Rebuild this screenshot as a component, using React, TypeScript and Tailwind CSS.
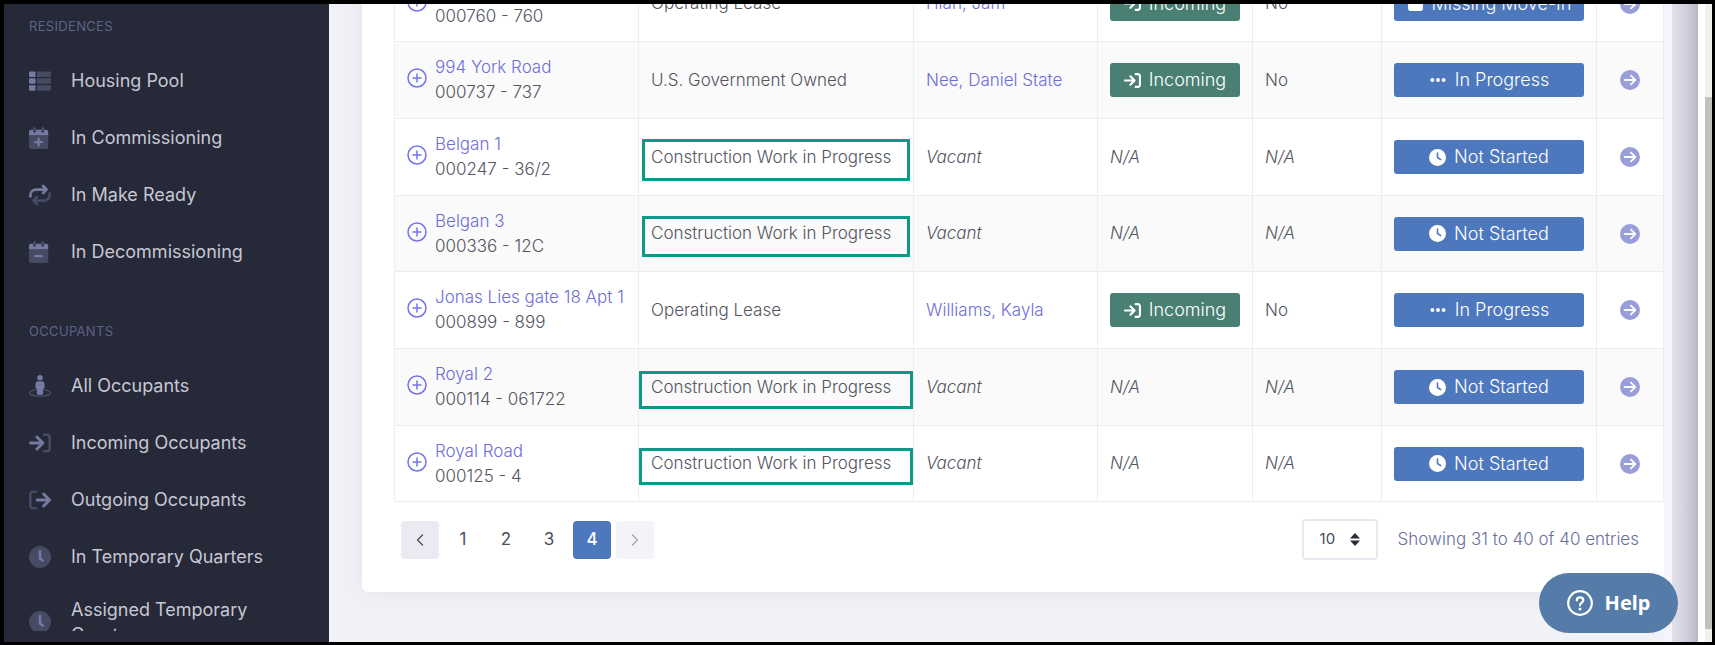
import type { ReactNode } from "react"
import { ChevronLeft, ChevronRight } from "lucide-react"
import { FaArrowRightToBracket, FaCircleArrowRight, FaClock, FaEllipsis, FaSquare } from "react-icons/fa6"

type IconName = "list" | "plus" | "repeat" | "minus" | "person" | "in" | "out" | "clock"

type Residence = {
  name: string
  code: string
  ownership: string
  occupant?: string
  status: "In Progress" | "Not Started" | "Missing Move-In"
  outline?: "tall" | "wide"
}

const residenceLinks: { label: string; icon: IconName }[] = [
  { label: "Housing Pool", icon: "list" },
  { label: "In Commissioning", icon: "plus" },
  { label: "In Make Ready", icon: "repeat" },
  { label: "In Decommissioning", icon: "minus" },
]

const occupantLinks: { label: string; icon: IconName }[] = [
  { label: "All Occupants", icon: "person" },
  { label: "Incoming Occupants", icon: "in" },
  { label: "Outgoing Occupants", icon: "out" },
  { label: "In Temporary Quarters", icon: "clock" },
  { label: "Assigned Temporary Quarters", icon: "clock" },
]

const residences: Residence[] = [
  { name: "Belgan 12", code: "000760 - 760", ownership: "Operating Lease", occupant: "Hian, Jam", status: "Missing Move-In" },
  { name: "994 York Road", code: "000737 - 737", ownership: "U.S. Government Owned", occupant: "Nee, Daniel State", status: "In Progress" },
  { name: "Belgan 1", code: "000247 - 36/2", ownership: "Construction Work in Progress", status: "Not Started", outline: "tall" },
  { name: "Belgan 3", code: "000336 - 12C", ownership: "Construction Work in Progress", status: "Not Started", outline: "tall" },
  { name: "Jonas Lies gate 18 Apt 1", code: "000899 - 899", ownership: "Operating Lease", occupant: "Williams, Kayla", status: "In Progress" },
  { name: "Royal 2", code: "000114 - 061722", ownership: "Construction Work in Progress", status: "Not Started", outline: "wide" },
  { name: "Royal Road", code: "000125 - 4", ownership: "Construction Work in Progress", status: "Not Started", outline: "wide" },
]

// Two-tone sidebar icons, the dim layer is #474a63
function NavIcon({ name }: { name: IconName }) {
  const dim = "#474a63"
  const calendar = (
    <>
      <path fill={dim} d="M0 192h448v272a48 48 0 0 1-48 48H48a48 48 0 0 1-48-48zM96 32a32 32 0 0 1 64 0v64H96zM288 32a32 32 0 0 1 64 0v64h-64z" />
      <path fill="currentColor" d="M0 192v-80a48 48 0 0 1 48-48h48v32a32 32 0 0 0 64 0V64h128v32a32 32 0 0 0 64 0V64h48a48 48 0 0 1 48 48v80z" />
    </>
  )
  const shapes: Record<IconName, ReactNode> = {
    list: (
      <>
        <path fill={dim} d="M184 32h304a24 24 0 0 1 24 24v80a24 24 0 0 1-24 24H184zM184 192h328v128H184zM184 352h328v104a24 24 0 0 1-24 24H184z" />
        <path fill="currentColor" d="M24 32h104a24 24 0 0 1 24 24v104H24a24 24 0 0 1-24-24V56a24 24 0 0 1 24-24zM24 192h104a24 24 0 0 1 24 24v80a24 24 0 0 1-24 24H24a24 24 0 0 1-24-24v-80a24 24 0 0 1 24-24zM24 352h128v104a24 24 0 0 1-24 24H24a24 24 0 0 1-24-24v-80a24 24 0 0 1 24-24z" />
      </>
    ),
    plus: (
      <>
        {calendar}
        <path stroke="currentColor" strokeWidth="52" strokeLinecap="round" d="M224 272v160M144 352h160" />
      </>
    ),
    minus: (
      <>
        {calendar}
        <path stroke="currentColor" strokeWidth="52" strokeLinecap="round" d="M144 352h160" />
      </>
    ),
    repeat: (
      <g fill="none" strokeWidth="64" strokeLinecap="round" strokeLinejoin="round">
        <path stroke={dim} d="M480 224v32a128 128 0 0 1-128 128H112M184 304l-80 80 80 80" />
        <path stroke="currentColor" d="M32 288v-32a128 128 0 0 1 128-128h240M328 48l80 80-80 80" />
      </g>
    ),
    person: (
      <>
        <path fill="none" stroke={dim} strokeWidth="34" strokeLinecap="round" d="M150 346C70 358 18 384 18 416c0 46 106 78 238 78s238-32 238-78c0-32-52-58-132-70" />
        <circle fill="currentColor" cx="256" cy="64" r="64" />
        <path fill="currentColor" d="M216 144h80a64 64 0 0 1 64 64v88a32 32 0 0 1-32 30v102a32 32 0 0 1-32 32h-80a32 32 0 0 1-32-32V326a32 32 0 0 1-32-30v-88a64 64 0 0 1 64-64z" />
      </>
    ),
    in: (
      <g fill="none" strokeLinecap="round" strokeLinejoin="round">
        <path stroke={dim} strokeWidth="60" d="M352 64h64a64 64 0 0 1 64 64v256a64 64 0 0 1-64 64h-64" />
        <path stroke="currentColor" strokeWidth="66" d="M34 256h280M184 116l140 140-140 140" />
      </g>
    ),
    out: (
      <g fill="none" strokeLinecap="round" strokeLinejoin="round">
        <path stroke={dim} strokeWidth="60" d="M160 64H96a64 64 0 0 0-64 64v256a64 64 0 0 0 64 64h64" />
        <path stroke="currentColor" strokeWidth="66" d="M190 256h280M340 116l140 140-140 140" />
      </g>
    ),
    clock: (
      <>
        <circle fill={dim} cx="256" cy="256" r="256" />
        <path fill="none" stroke="currentColor" strokeWidth="60" strokeLinecap="round" strokeLinejoin="round" d="M256 116v176l62 44" />
      </>
    ),
  }

  return (
    <svg viewBox="0 0 512 512" className="size-[22px] shrink-0 text-[#777aa0]" aria-hidden="true">
      {shapes[name]}
    </svg>
  )
}

function NavSection({ title, links }: { title: string; links: { label: string; icon: IconName }[] }) {
  return (
    <section>
      <h2 className="pb-4 text-[13px] leading-5 tracking-wide text-[#5f6389] uppercase">{title}</h2>
      <ul>
        {links.map((link) => (
          <li key={link.label}>
            <a href="#" className="flex min-h-[57px] items-center gap-5 py-3 text-lg leading-[25px] text-[#c6c7d3]">
              <NavIcon name={link.icon} />
              <span className="max-w-52">{link.label}</span>
            </a>
          </li>
        ))}
      </ul>
    </section>
  )
}

function StatusIcon({ status }: { status: Residence["status"] }) {
  if (status === "In Progress") return <FaEllipsis className="size-[18px]" />
  if (status === "Not Started") return <FaClock className="size-[17px]" />
  return <FaSquare className="size-[17px]" />
}

function ResidenceRow({ item }: { item: Residence }) {
  const cell = "border border-[#edecf2] px-3"

  return (
    <tr className="h-[77px] even:bg-[#fafafa] nth-[3n+1]:h-[76px]">
      <td className={cell}>
        <div className="flex items-center gap-2">
          <button aria-label={`Expand ${item.name}`} className="mb-1 shrink-0 text-[#7274ee]">
            <svg viewBox="0 0 20 20" className="size-5" fill="none" stroke="currentColor" strokeWidth="1.5">
              <circle cx="10" cy="10" r="9" />
              <path d="M10 5.5v9M5.5 10h9" />
            </svg>
          </button>
          <div className="whitespace-nowrap">
            <a href="#" className="block text-[#6d6dd8]">
              {item.name}
            </a>
            <span className="block">{item.code}</span>
          </div>
        </div>
      </td>
      <td className={`${cell} relative whitespace-nowrap`}>
        {item.ownership}
        {item.outline === "tall" && <span className="absolute inset-x-[3px] top-5 bottom-[14px] border-3 border-[#0b9a87]" />}
        {item.outline === "wide" && <span className="absolute inset-x-0 top-[22px] bottom-4 border-3 border-[#0b9a87]" />}
      </td>
      <td className={`${cell} whitespace-nowrap`}>
        {item.occupant ? (
          <a href="#" className="text-[#6d6dd8]">
            {item.occupant}
          </a>
        ) : (
          <i>Vacant</i>
        )}
      </td>
      <td className={cell}>
        {item.occupant ? (
          <span className="flex h-[34px] items-center justify-center gap-2 rounded-[3px] bg-[#4a7f74] text-lg text-white">
            <FaArrowRightToBracket className="size-[17px]" />
            Incoming
          </span>
        ) : (
          <i>N/A</i>
        )}
      </td>
      <td className={cell}>{item.occupant ? "No" : <i>N/A</i>}</td>
      <td className={cell}>
        <button className="flex h-[34px] w-full items-center justify-center gap-2 rounded-[3px] bg-[#4d78be] text-lg whitespace-nowrap text-white">
          <StatusIcon status={item.status} />
          {item.status}
        </button>
      </td>
      <td className={cell}>
        <a href="#" aria-label={`Open ${item.name}`} className="flex justify-center text-[#999dda]">
          <FaCircleArrowRight className="size-5" />
        </a>
      </td>
    </tr>
  )
}

function Pagination() {
  const page = "flex h-[38px] w-[38px] items-center justify-center rounded-[4px]"

  return (
    <nav aria-label="Pages" className="flex gap-[5px] text-[17px] text-[#4c4e5c]">
      <button aria-label="Previous page" className={`${page} bg-[#ebe9f2]`}>
        <ChevronLeft className="size-5" strokeWidth={1.5} />
      </button>
      <button className={page}>1</button>
      <button className={page}>2</button>
      <button className={page}>3</button>
      <button aria-current="page" className={`${page} bg-[#4d78be] font-medium text-white`}>
        4
      </button>
      <button aria-label="Next page" className={`${page} bg-[#f4f3f8] text-[#a3a3ab]`}>
        <ChevronRight className="size-5" strokeWidth={1.5} />
      </button>
    </nav>
  )
}

export default function App() {
  return (
    <div className="relative flex h-screen overflow-hidden border-4 border-r-3 border-b-3 border-black bg-[#f1f2f7] font-['Inter','Liberation_Sans',sans-serif]">
      <aside className="w-[325px] shrink-0 bg-[#262938] pb-[11px]">
        <div className="flex h-full flex-col gap-[41px] overflow-hidden px-[25px] pt-3">
          <NavSection title="Residences" links={residenceLinks} />
          <NavSection title="Occupants" links={occupantLinks} />
        </div>
      </aside>

      {/* Scrolled to the end, so the list is anchored at the bottom */}
      <main className="flex min-w-0 flex-1 flex-col justify-end pb-[50px] pl-[33px]">
        <div className="rounded-bl-md bg-white pb-8 pl-8 shadow-[0_0_24px_rgba(82,63,105,0.08)]">
          <table className="w-full table-fixed border-collapse text-[17px] leading-[25px] font-light text-[#53555f]">
            <colgroup>
              <col className="w-[244px]" />
              <col className="w-[275px]" />
              <col className="w-[184px]" />
              <col className="w-[155px]" />
              <col className="w-[129px]" />
              <col className="w-[215px]" />
              <col />
            </colgroup>
            <tbody>
              {residences.map((item) => (
                <ResidenceRow key={item.code} item={item} />
              ))}
            </tbody>
          </table>

          <div className="flex items-center justify-between pt-[17px] pr-[25px] pl-[7px]">
            <Pagination />
            <div className="flex items-center gap-5">
              <div className="relative">
                <select
                  aria-label="Entries per page"
                  className="h-[41px] w-[76px] appearance-none rounded-[4px] border-2 border-[#e9e8f0] bg-white pl-4 text-[15px] text-[#484a54]"
                >
                  <option>10</option>
                </select>
                <svg viewBox="0 0 10 13" className="pointer-events-none absolute top-[14px] right-[18px] h-[13px] w-[10px]" fill="#2b2d35">
                  <path d="M5 0l5 5.5H0zM5 13l5-5.5H0z" />
                </svg>
              </div>
              <span className="text-[17px] font-light text-[#6c6f9c]">Showing 31 to 40 of 40 entries</span>
            </div>
          </div>
        </div>
      </main>

      {/* Shadow of the drawer that sits off the right edge */}
      <div className="w-2 shrink-0 bg-[#f5f4fa]" />
      <div className="w-[26px] shrink-0 bg-linear-to-r from-[#e2e1eb] via-[#d3d1de] to-[#bab6c8]" />
      <div className="w-[7px] shrink-0 bg-white" />
      <div className="flex w-[7px] shrink-0 flex-col bg-[#f1f1f1] pt-[93px] pb-[13px]">
        <div className="flex-1 bg-[#c1c1c1]" />
      </div>

      <button className="absolute right-[34px] bottom-[9px] flex h-[60px] w-[139px] items-center justify-center gap-3 rounded-full bg-[#557ca8] font-['Noto_Sans','Open_Sans',sans-serif] text-xl font-bold text-white">
        <svg viewBox="0 0 26 26" className="size-[26px]" fill="none" stroke="currentColor" strokeLinecap="round" strokeLinejoin="round" aria-hidden="true">
          <circle cx="13" cy="13" r="11.8" strokeWidth="2.2" />
          <path strokeWidth="2.2" d="M9.8 10.4C9.8 8.5 11.2 7.4 13 7.4s3.3 1.1 3.3 2.9c0 2.4-3.3 2.5-3.3 5" />
          <circle cx="13" cy="19" r="1.5" fill="currentColor" stroke="none" />
        </svg>
        Help
      </button>
    </div>
  )
}
